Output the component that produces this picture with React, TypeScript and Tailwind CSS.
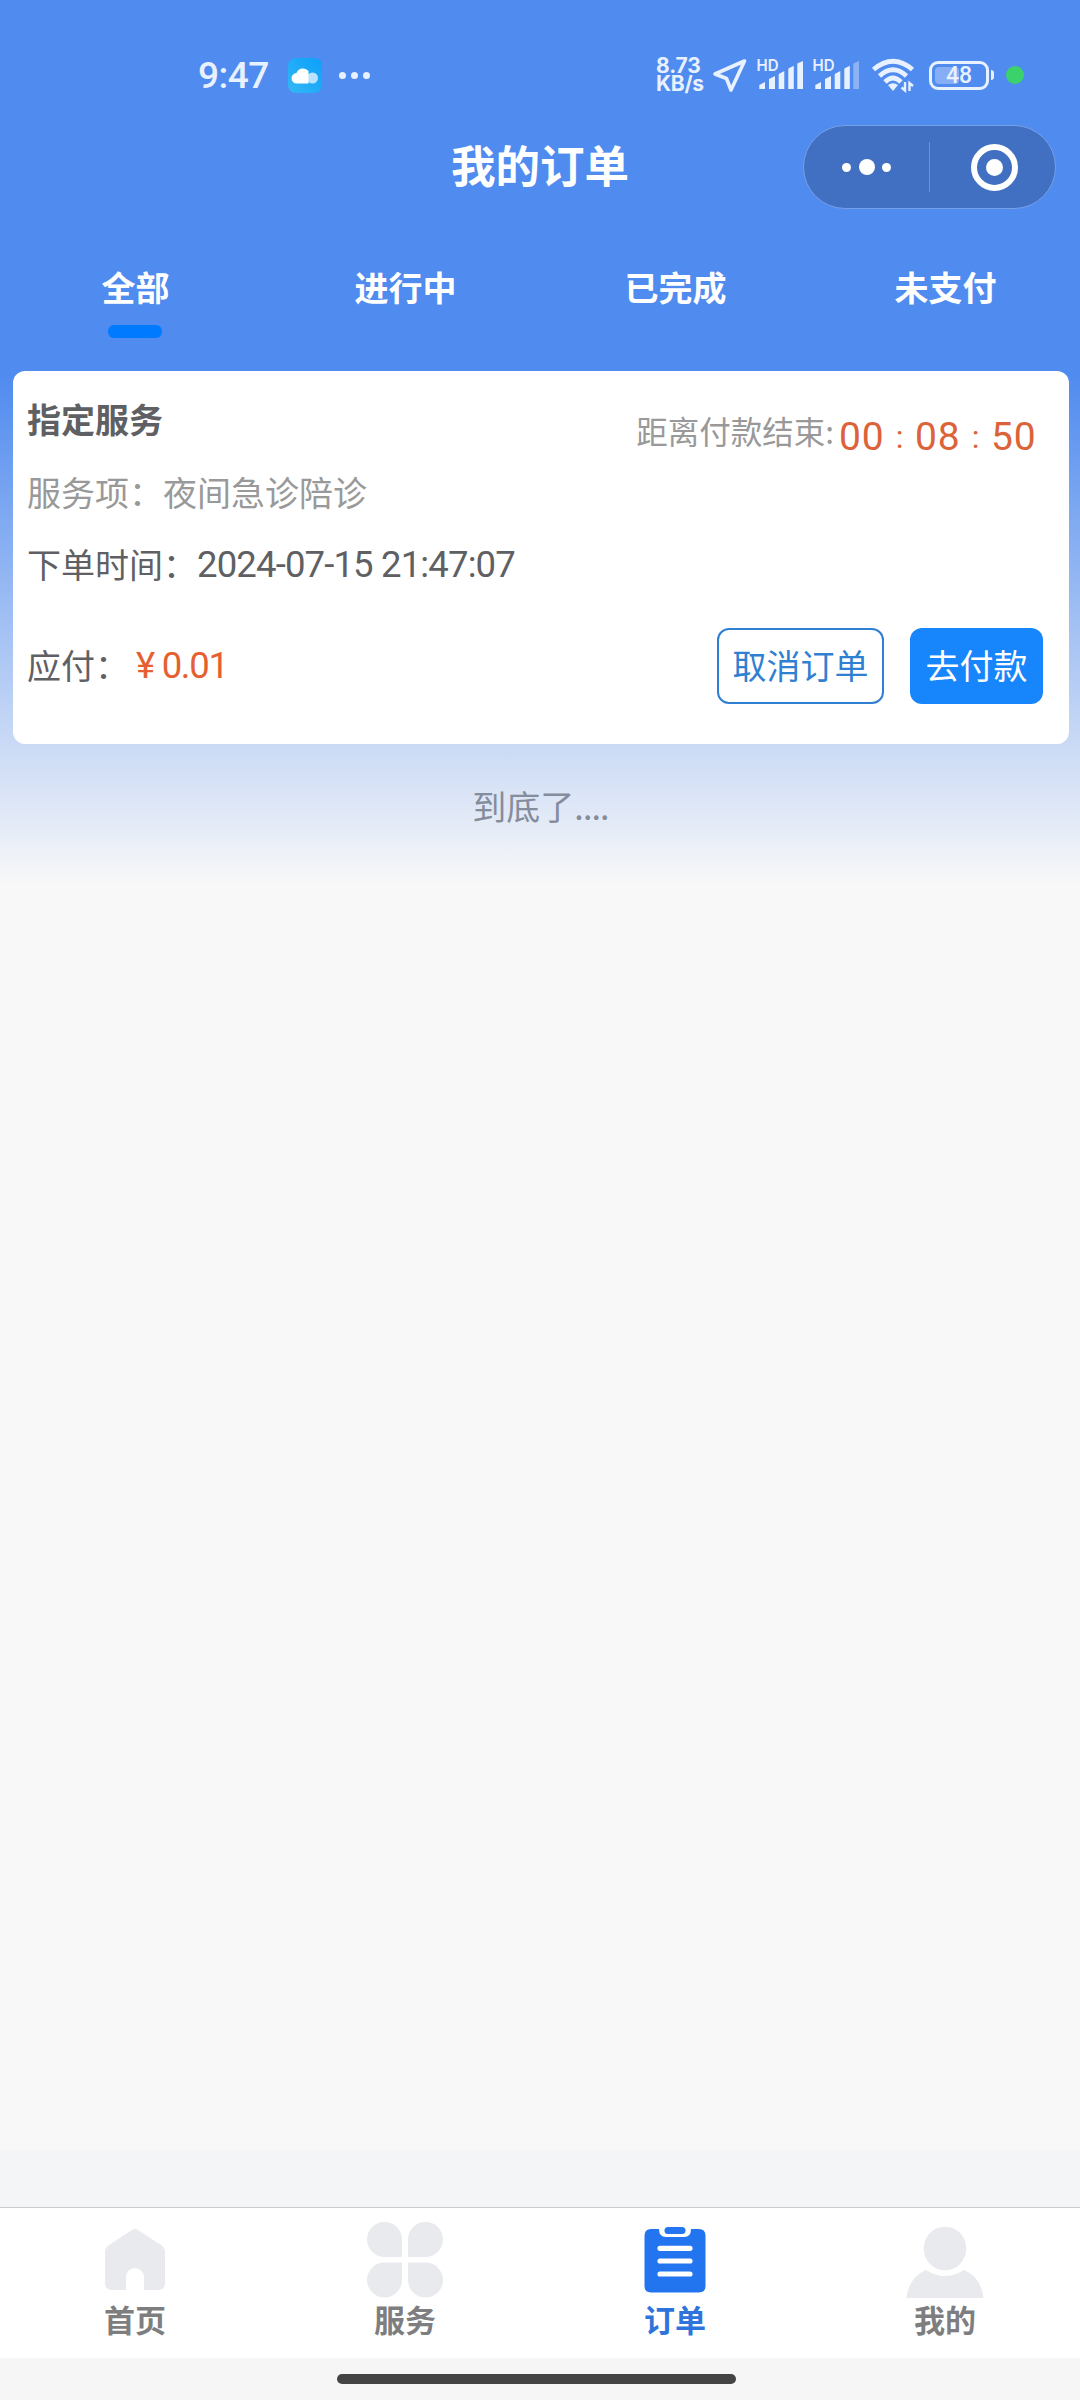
import { useState } from 'react';

const tabs = ['全部', '进行中', '已完成', '未支付'];

const numCls = "font-['Roboto','Noto_Sans_CJK_SC',sans-serif]";

function SignalBars({ weak }: { weak?: boolean }) {
  return (
    <svg width="48" height="36" viewBox="0 0 48 36" fill="#e8f1ff">
      <text x="0.5" y="14" fontFamily="Inter, sans-serif" fontSize="15.5" fontWeight="600" textLength="22" lengthAdjust="spacingAndGlyphs">HD</text>
      <path d="M3.300 32V28L9 25V32Z"/>
      <path d="M13 32V22L19 19V32Z"/>
      <path d="M22.700 32V17L28.300 14V32Z"/>
      <path d="M32.300 32V11.500L37.800 8.800V32Z"/>
      <path d="M41.300 32V6.500L47 4V32Z" opacity={weak ? 0.4 : 1}/>
    </svg>
  );
}

function StatusBar() {
  return (
    <div className="h-[110px] pt-[57px] flex items-start justify-between pl-[198px] pr-[56px] text-[#e8f1ff]">
      <div className="flex items-center h-9">
        <span className="w-[90px] pt-px font-['Roboto',sans-serif] font-medium text-[37px] leading-9 tracking-[-0.5px]">9:47</span>
        <svg width="34" height="35" viewBox="0 0 34 35">
          <defs>
            <linearGradient id="sky" x1="0" y1="1" x2="1" y2="0">
              <stop offset="0" stopColor="#35b7f5"/>
              <stop offset="1" stopColor="#0aa0fa"/>
            </linearGradient>
          </defs>
          <rect width="34" height="35" rx="8" fill="url(#sky)"/>
          <circle cx="24.500" cy="20" r="5.500" fill="#b8e2ff"/>
          <path d="M9 25.500A5 5 0 0 1 8.500 15A7 7 0 0 1 20.500 13V25.500Z" fill="#fff"/>
        </svg>
        <div className="flex gap-[5px] ml-[17px]">
          {[0, 1, 2].map(n => <i key={n} className="size-[7px] rounded-full bg-[#e8f1ff]"/>)}
        </div>
      </div>

      <div className="flex items-center h-9">
        <div className="w-[56px] font-['Inter',sans-serif] font-bold text-[21px] leading-[18.5px]">
          <div className="tracking-[-0.1px]">8.73</div>
          <div className="tracking-[-0.3px]">KB/s</div>
        </div>
        <svg width="36" height="36" viewBox="0 0 36 36" fill="none" stroke="#e8f1ff" strokeWidth="3.600" strokeLinejoin="round">
          <path d="M32.500 4L3 17L14.500 21.500L19 33Z"/>
        </svg>
        <div className="flex gap-2 ml-2">
          <SignalBars/>
          <SignalBars weak/>
        </div>
        <svg className="ml-[11px]" width="44" height="36" viewBox="0 0 44 36" fill="none" stroke="#e8f1ff" strokeWidth="4.800">
          <path d="M2.500 12.500Q22 -4 41.500 12.500"/>
          <path d="M8.500 19Q22 6.500 35.500 19"/>
          <path d="M14 25Q22 17 30 25"/>
          <path d="M17 28Q22 24.500 27 28L22 34Z" fill="#e8f1ff" stroke="none"/>
          <path d="M34 25V33.500L30.500 30.500M38.500 34V26L42 29" strokeWidth="2.400"/>
        </svg>
        <div className="relative ml-[14px] w-[60px] h-[29px] rounded-[9px] border-3 border-[#e8f1ff] flex items-center justify-center">
          <div className="absolute left-[3px] top-[3px] w-[24px] h-[17px] rounded-[4px] bg-[#86aef6]"/>
          <span className="relative pt-px font-['Roboto',sans-serif] font-medium text-[23px] leading-6">48</span>
        </div>
        <div className="ml-[2px] w-[3px] h-[10px] rounded-r bg-[#e8f1ff]"/>
        <div className="ml-3 size-[18px] rounded-full bg-[#3bd16b]"/>
      </div>
    </div>
  );
}

function TitleBar() {
  return (
    <div className="h-[114px] grid grid-cols-[1fr_auto_1fr] items-center">
      <div/>
      <h1 className="pb-[5px] font-bold text-[44.5px] leading-none text-white">我的订单</h1>
      <div className="justify-self-end mr-[24px] w-[253px] h-[84px] rounded-full border border-[#769fe6] bg-[#416fc2] flex items-center">
        <div className="w-[125px] flex items-center justify-center gap-[7.500px]">
          <i className="size-[9px] rounded-full bg-white"/>
          <i className="size-4 rounded-full bg-white"/>
          <i className="size-[9px] rounded-full bg-white"/>
        </div>
        <div className="w-px h-[50px] bg-[#6792dd]"/>
        <div className="flex-1 flex justify-center pl-[4px]">
          <div className="size-[47px] rounded-full border-6 border-white flex items-center justify-center">
            <i className="size-[17px] rounded-full bg-white"/>
          </div>
        </div>
      </div>
    </div>
  );
}

function OrderCard() {
  return (
    <div className="ml-[13px] mr-[11px] h-[373px] rounded-xl bg-white pl-[14px] pr-[26px] text-[34px] leading-[50px] text-[#5f6063]">
      <div className="flex justify-between pt-[23px] h-[96px]">
        <div className="font-bold">指定服务</div>
        <div className="flex items-start pt-[11px] pr-[7px]">
          <span className="text-[31.5px] text-[#999]">距离付款结束:</span>
          <span className={`${numCls} ml-[5px] pt-[7px] text-[39px] text-[#dc6339] flex`}>
            <span className="w-[45px] tracking-[0.8px]">00</span>
            <span className="w-[31px] text-center text-[32px]">:</span>
            <span className="w-[45px] tracking-[0.8px]">08</span>
            <span className="w-[31px] text-center text-[32px]">:</span>
            <span className="w-[45px] tracking-[0.8px]">50</span>
          </span>
        </div>
      </div>
      <div className="text-[#999]">服务项：夜间急诊陪诊</div>
      <div className="h-[50px] mt-[22px] flex">
        <span>下单时间：</span>
        <span className={`${numCls} pt-px text-[36.5px] tracking-[-0.85px]`}>2024-07-15 21:47:07</span>
      </div>
      <div className="mt-[39px] flex items-center justify-between">
        <div className="flex">
          <span className="-mt-px">应付：</span>
          <span className={`${numCls} ml-[7px] text-[36.5px] tracking-[-1.3px] text-[#e55f30]`}>¥ 0.01</span>
        </div>
        <div className="flex gap-[26px]">
          <button className="w-[167px] h-[76px] pb-[2px] rounded-xl border-2 border-[#2f7fd2] text-[#2f7fd2]">取消订单</button>
          <button className="w-[133px] h-[76px] pb-[2px] rounded-xl bg-[#1785fb] text-white">去付款</button>
        </div>
      </div>
    </div>
  );
}

const navItems = [
  {
    label: '首页',
    icon: (
      <path d="M36 9Q39 7 42 9L65 24Q69 27 69 31V62Q69 69 62 69H48V56A9 9 0 0 0 30 56V69H16Q9 69 9 62V31Q9 27 13 24Z" fill="#e9eaee"/>
    ),
  },
  {
    label: '服务',
    icon: (
      <g fill="#e9eaee">
        <path d="M36 36V18.500A17.500 17.500 0 1 0 18.500 36Z"/>
        <path d="M42 36V18.500A17.500 17.500 0 1 1 59.500 36Z"/>
        <path d="M36 41.500V59A17.500 17.500 0 1 1 18.500 41.500Z"/>
        <path d="M42 41.500V59A17.500 17.500 0 1 0 59.500 41.500Z"/>
      </g>
    ),
  },
  {
    label: '订单',
    icon: (
      <>
        <path d="M15 8H23Q23 16 30 16H48Q55 16 55 8H63Q69.500 8 69.500 15V65Q69.500 71.500 63 71.500H15Q8.500 71.500 8.500 65V15Q8.500 8 15 8Z" fill="#2274ef"/>
        <rect x="28.500" y="6" width="21" height="7" rx="3.500" fill="#2274ef"/>
        <path d="M24 27.300H54M24 40H54M24 53H54" stroke="#fff" strokeWidth="5.200" strokeLinecap="round"/>
      </>
    ),
  },
  {
    label: '我的',
    icon: (
      <g fill="#e9eaee">
        <ellipse cx="39" cy="27.500" rx="21.300" ry="21.800"/>
        <path d="M20 49Q39 61 58 49Q75 56 77.500 77H.5Q3 56 20 49Z"/>
      </g>
    ),
  },
];

export default function App() {
  const [tab, setTab] = useState(0);
  const [nav, setNav] = useState(2);

  return (
    <div className="w-[1080px] h-[2400px] overflow-hidden flex flex-col bg-[#f8f8f8] font-['Noto_Sans_CJK_SC',sans-serif]">
      <div className="h-[2150px] bg-[linear-gradient(180deg,#508bef_0px,#508bef_375px,#f8f8f8_885px)]">
        <StatusBar/>
        <TitleBar/>

        {/* Tabs */}
        <div className="h-[147px] grid grid-cols-4">
          {tabs.map((t, i) => (
            <button key={t} onClick={() => setTab(i)} className="flex flex-col items-center pt-[38px] text-[34px] leading-[50px] font-bold text-white">
              <span className="pl-px">{t}</span>
              {i === tab && <span className="mt-[13px] w-[54px] h-[13px] rounded-[6px] bg-[#007aff]"/>}
            </button>
          ))}
        </div>

        <OrderCard/>
        <div className="mt-[37px] pl-px text-center text-[34px] leading-[50px] text-[#858c9b]">
          到底了<span className="tracking-[-0.85px]">....</span>
        </div>
      </div>

      <div className="h-[57px] bg-[#f3f5f7]"/>

      {/* Bottom nav */}
      <nav className="h-[151px] border-t border-[#c8cacd] bg-white grid grid-cols-4">
        {navItems.map((item, i) => (
          <button
            key={item.label}
            onClick={() => setNav(i)}
            className={`flex flex-col items-center pt-[13px] text-[31px] leading-[44px] font-bold ${i === nav ? 'text-[#2e74dc]' : 'text-[#7e7e80]'}`}
          >
            <svg className="overflow-visible" width="78" height="76" viewBox="0 0 78 76">{item.icon}</svg>
            {item.label}
          </button>
        ))}
      </nav>

      {/* Home indicator */}
      <div className="flex-1 bg-[#f6f6f6] flex justify-center items-start pt-4 pr-[7px]">
        <div className="w-[399px] h-[10px] rounded-full bg-[#444]"/>
      </div>
    </div>
  );
}
